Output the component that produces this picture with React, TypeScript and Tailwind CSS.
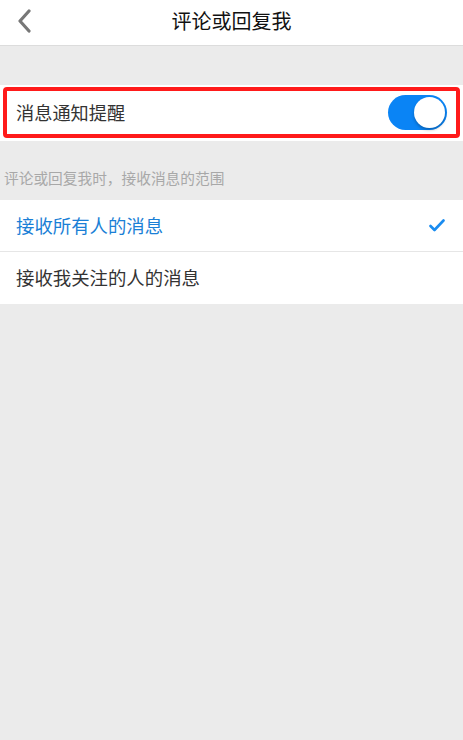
import React, { useState } from 'react';

const FONT = '"Noto Sans CJK SC", "Liberation Sans", sans-serif';

export default function App() {
  const [enabled, setEnabled] = useState(true);
  const [scope, setScope] = useState<'all' | 'follow'>('all');

  const options: { key: 'all' | 'follow'; label: string }[] = [
    { key: 'all', label: '接收所有人的消息' },
    { key: 'follow', label: '接收我关注的人的消息' },
  ];

  return (
    <div className="w-[463px] h-[740px] bg-[#ebebeb] flex flex-col" style={{ fontFamily: FONT }}>
      {/* 頂部導航 */}
      <header className="h-[46px] bg-white border-b border-[#dcdcdc] flex items-center relative shrink-0">
        <button className="absolute left-[14px] top-[8px] w-[20px] h-[26px] flex items-center justify-center">
          <svg width="16" height="24" viewBox="0 0 16 24" fill="none">
            <path d="M13 2 L4 12 L13 22" stroke="#777" strokeWidth="3.2" strokeLinecap="round" strokeLinejoin="round" />
          </svg>
        </button>
        <h1 className="flex-1 text-center text-[20px] font-normal text-[#111] leading-none -mt-[4px]">评论或回复我</h1>
      </header>

      <div className="h-[39px] shrink-0" />

      {/* 消息通知提醒 */}
      <div className="bg-white h-[56px] px-[3px] pt-[2px] shrink-0">
        <div className="h-[51px] border-[4px] border-[#ff1a1a] rounded-[4px] flex items-center justify-between pl-[9px] pr-[9px]">
          <span className="text-[18.2px] text-[#333]">消息通知提醒</span>
          <button
            onClick={() => setEnabled(!enabled)}
            className={`w-[59px] h-[35px] rounded-full relative ${enabled ? 'bg-[#0a84f5]' : 'bg-[#e5e5e5]'}`}
          >
            <span
              className={`absolute top-[2px] w-[31px] h-[31px] rounded-full bg-white shadow-[0_2px_3px_rgba(0,0,0,0.25)] ${enabled ? 'left-[26px]' : 'left-[2px]'}`}
            />
          </button>
        </div>
      </div>

      <div className="h-[59px] flex items-center pl-[4px] pt-[16px] shrink-0">
        <span className="text-[14.7px] text-[#a8a8a8]">评论或回复我时，接收消息的范围</span>
      </div>

      {/* 範圍選項 */}
      <div className="bg-white shrink-0">
        {options.map((opt, idx) => (
          <div
            key={opt.key}
            onClick={() => setScope(opt.key)}
            className={`h-[52px] flex items-center justify-between pl-[16px] pr-[18px] ${idx === 0 ? 'border-b border-[#e6e6e6]' : ''}`}
          >
            <span className={`text-[18.4px] ${scope === opt.key ? 'text-[#1a7fd6]' : 'text-[#333]'}`}>{opt.label}</span>
            {scope === opt.key && (
              <svg width="16" height="13" viewBox="0 0 16 13" fill="none">
                <path d="M1.5 7 L5.5 11 L14.5 1.5" stroke="#1a8cf0" strokeWidth="2.6" strokeLinecap="round" strokeLinejoin="round" />
              </svg>
            )}
          </div>
        ))}
      </div>
    </div>
  );
}
